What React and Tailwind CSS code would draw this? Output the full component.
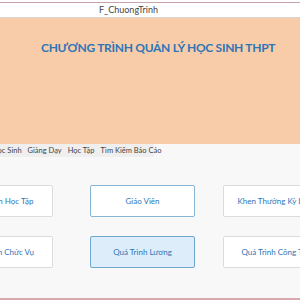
export default function App() {
  const row1 = ["Thông Tin Học Tập", "Giáo Viên", "Khen Thưởng Kỷ Luật"];
  const row2 = ["Thông Tin Chức Vụ", "Quá Trình Lương", "Quá Trình Công Tác"];

  const base = "w-[105px] h-[32px] shrink-0 rounded-[2px] border text-[8px] text-[#2e75b6] whitespace-nowrap";

  return (
    <div className="w-[300px] h-[300px] overflow-hidden bg-[#f8f8f8] flex flex-col font-['Lato',sans-serif]">
      {/* window title */}
      <div className="h-[2px] bg-white shrink-0" />
      <div className="h-[1px] bg-[#c9a3ab] shrink-0" />
      <div className="h-[15px] bg-white shrink-0 flex items-center border-b border-[#d8d4d0]">
        <span className="ml-[99px] text-[9px] text-[#444]">F_ChuongTrinh</span>
      </div>

      {/* header */}
      <div className="h-[126px] shrink-0 bg-[#f8cca9] pt-[21px]">
        <h1 className="ml-[41px] text-[12px] font-bold tracking-[-0.3px] text-[#2e75b6] whitespace-nowrap">
          CHƯƠNG TRÌNH QUẢN LÝ HỌC SINH THPT
        </h1>
      </div>

      {/* tabs */}
      <div className="h-[13px] shrink-0 flex">
        <div className="w-[162px] bg-[#efefef] flex items-center ml-[-8px] gap-[6px] text-[7.5px] text-[#444] whitespace-nowrap">
          <span>Học Sinh</span>
          <span>Giảng Dạy</span>
          <span>Học Tập</span>
          <span>Tìm Kiếm Báo Cáo</span>
        </div>
      </div>

      {/* buttons */}
      <div className="flex-1 flex flex-col gap-[19px] pt-[28px]">
        {[row1, row2].map((row, r) => (
          <div key={r} className="flex ml-[-52px]">
            {row.map((label, i) => {
              const active = label === "Quá Trình Lương";
              const focus = label === "Giáo Viên";
              const margin = i === 1 ? "ml-[37px]" : i === 2 ? "ml-[28px]" : "";
              return (
                <button
                  key={label}
                  className={
                    active
                      ? `${base} ${margin} border-[#6fa8cf] bg-[#ddedf9]`
                      : focus
                      ? `${base} ${margin} border-[#86b5d6] bg-white`
                      : `${base} ${margin} border-[#dcdcdc] bg-white`
                  }
                >
                  {label}
                </button>
              );
            })}
          </div>
        ))}
      </div>

      <div className="h-[2px] bg-[#d9a9b0] shrink-0" />
    </div>
  );
}
